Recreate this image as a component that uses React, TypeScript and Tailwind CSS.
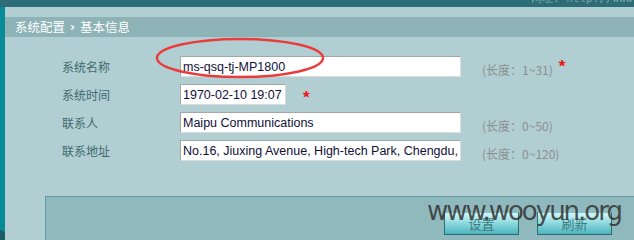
const rows = [
  { label: "系统名称", value: "ms-qsq-tj-MP1800", width: "w-[281px]", hint: "(长度：1~31)", star: "hint" },
  { label: "系统时间", value: "1970-02-10 19:07", width: "w-[106px]", hint: "", star: "input" },
  { label: "联系人", value: "Maipu Communications", width: "w-[281px]", hint: "(长度：0~50)", star: "" },
  { label: "联系地址", value: "No.16, Jiuxing Avenue, High-tech Park, Chengdu, P.R.China", width: "w-[281px]", hint: "(长度：0~120)", star: "" },
];

const cjk = "font-['SimSun','Noto_Sans_CJK_SC',sans-serif]";

function Star() {
  return <span className="font-['Liberation_Sans',sans-serif] text-[17px] font-bold leading-none text-[#ee1111]">*</span>;
}

export default function App() {
  return (
    <div className="relative flex h-[240px] w-[634px] flex-col overflow-hidden bg-[#b1ced2]">
      <div className="relative h-[7px] shrink-0 overflow-hidden bg-[#2d6d77]">
        <span className="absolute left-[531px] top-[-7px] whitespace-nowrap font-['DejaVu_Sans_Mono',monospace] text-[11px] leading-[11px] text-[#7fa5aa]">
          网址: http://www.u
        </span>
      </div>
      <div className="flex min-h-0 flex-1">
        <div className="flex w-[5px] shrink-0 flex-col bg-[#078b99]">
          <div className="mt-auto h-[10px] rounded-tr-[6px] bg-[#1f5d65]" />
        </div>
        <div className="flex min-w-0 flex-1 flex-col">
          <div className={`mt-[10px] flex h-[20px] items-center gap-[5px] bg-[#8db3b7] pl-[10px] text-[12.5px] text-white ${cjk}`}>
            <span>系统配置</span>
            <span className="font-['DejaVu_Sans',sans-serif] text-[12px] font-bold">›</span>
            <span>基本信息</span>
          </div>

          <div className="mt-[19px] flex flex-col gap-[7px] pl-[57px]">
            {rows.map((r) => (
              <div key={r.label} className="flex h-[21px] items-center">
                <div className={`w-[118px] text-[12px] text-[#3f6a6e] ${cjk}`}>{r.label}</div>
                <input
                  readOnly
                  value={r.value}
                  className={`${r.width} h-[21px] border border-t-[#a3a7a8] border-l-[#a3a7a8] border-r-[#dcdcdc] border-b-[#dcdcdc] bg-white px-[2px] font-['Liberation_Sans',Arial,sans-serif] text-[12.5px] text-[#101038] outline-none`}
                />
                {r.star === "input" && (
                  <span className="ml-[17px] mt-[4px]">
                    <Star />
                  </span>
                )}
                {r.hint && (
                  <span className={`ml-[21px] mt-[7px] text-[12px] text-[#8a9091] ${cjk}`}>{r.hint}</span>
                )}
                {r.star === "hint" && (
                  <span className="ml-[6px] mt-[-2px]">
                    <Star />
                  </span>
                )}
              </div>
            ))}
          </div>

          <div className="ml-[40px] mt-auto flex h-[44px] justify-end gap-[18px] border-l border-t border-[#5e9aa3] bg-[#8fb9bd] pr-[22px] pt-[15px]">
            {["设置", "刷新"].map((b) => (
              <div
                key={b}
                className={`flex h-[23px] w-[75px] items-center justify-center border border-[#2f6a70] border-t-[#7fc4ca] bg-gradient-to-b from-[#d2f6f8] via-[#8ad8de] to-[#4db4bc] text-[13px] text-[#3c7a80] ${cjk}`}
              >
                {b}
              </div>
            ))}
          </div>
        </div>
      </div>

      <svg className="pointer-events-none absolute left-0 top-0" width="634" height="240">
        <ellipse cx="240" cy="58" rx="83" ry="19" fill="none" stroke="#ea3c3c" strokeWidth="2.5" />
      </svg>
      <span className="pointer-events-none absolute left-[427px] top-[196px] whitespace-nowrap font-['DejaVu_Sans',sans-serif] text-[26px] leading-[30px] tracking-[-2px] text-[#333]/85">
        www.wooyun.org
      </span>
    </div>
  );
}
